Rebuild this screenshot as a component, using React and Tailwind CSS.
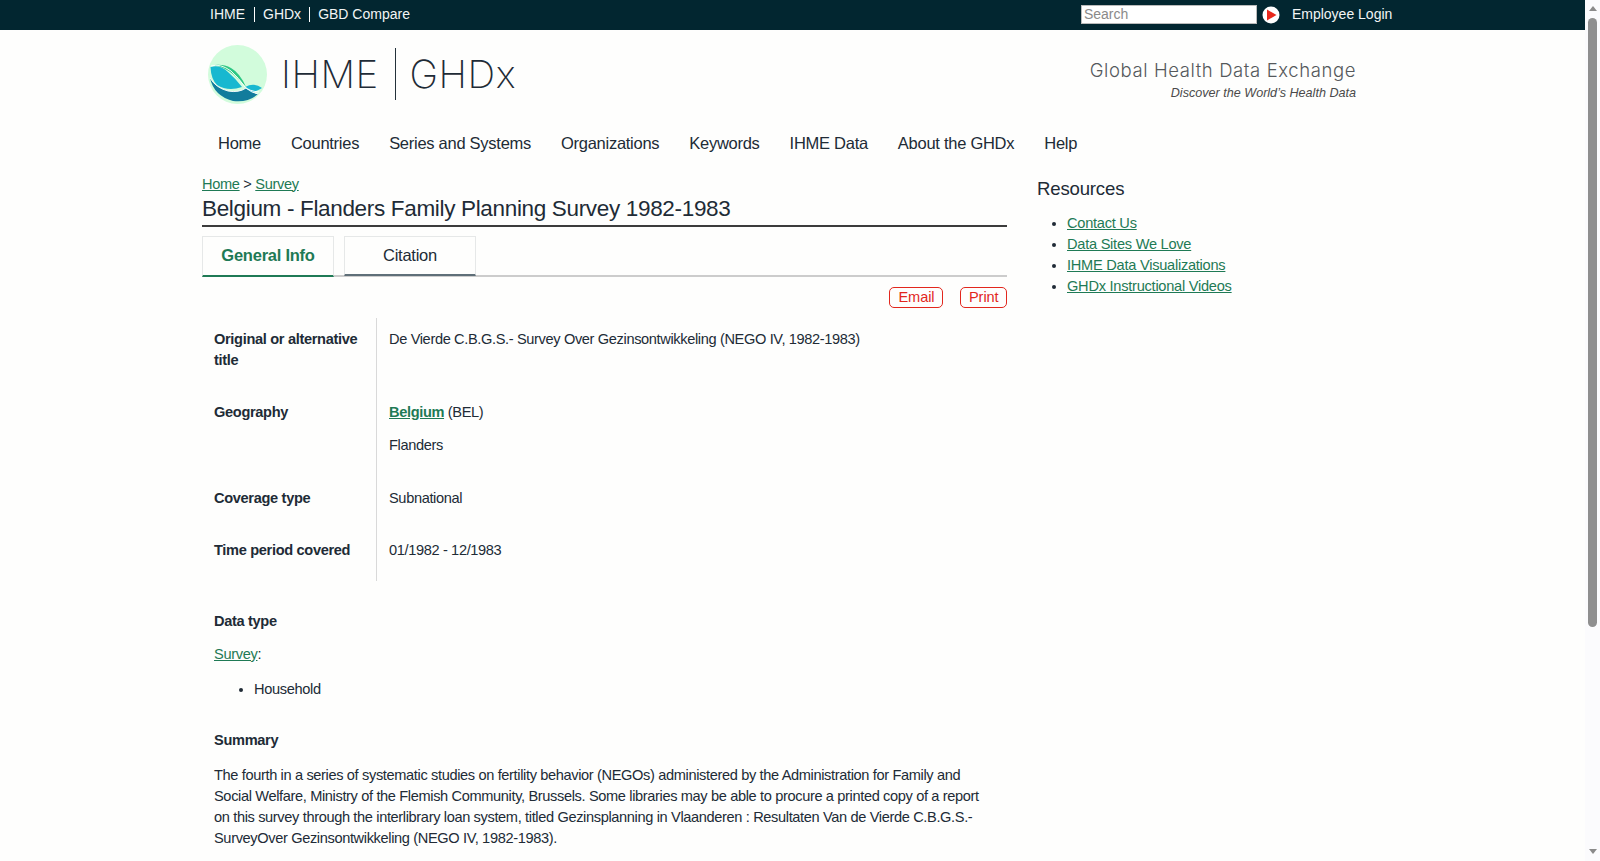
const SANS = "font-['Liberation_Sans',Arial,sans-serif]";

function Logo() {
  return (
    <svg width="59" height="59" viewBox="0 0 59 59" className="shrink-0 mt-[3px]">
      <circle cx="29.5" cy="29.5" r="29.5" fill="#d2fcdc" />
      <path d="M2 33 Q8 43 20 46 Q31 48 38 43 Q44 48 50 49 Q40 58 25 56 Q6 51 2 33Z" fill="#127c9c" />
      <path d="M2.5 22 Q12 19 20 27 Q28 34 34 42 Q20 47 9 40 Q3 34 2.5 22Z" fill="#17b8d0" />
      <path d="M6 20 Q16 19 23 23 Q32 28 38 42 Q31 34 25 29 Q16 22 6 20Z" fill="#2dc884" />
      <path d="M37 42 Q46 37 54 43 Q48 47 43 47 Q39 45 37 42Z" fill="#17b8d0" />
      <path d="M2 33 Q8 43 20 46 Q31 48 38 43 Q44 48 50 49" fill="none" stroke="#fff" strokeWidth="0.9" />
      <path d="M3 21 Q12 18 23 26 Q31 33 37 42 Q41 46 51 47" fill="none" stroke="#fff" strokeWidth="0.9" />
    </svg>
  );
}

function Tab({ active, children }) {
  return (
    <div
      className={`w-[132px] flex items-center justify-center border border-[#e6e8e8] text-[16.5px] border-b-2 tracking-[-0.25px] self-start ${
        active ? "h-[41px] pb-[1px] border-b-[#1f7a55] text-[#1f7a55] font-bold" : "h-[40px] border-b-[#5f6f78] text-[#212b36]"
      }`}
    >
      {children}
    </div>
  );
}

function Row({ label, children, extra }) {
  return (
    <div className="grid grid-cols-[175px_1fr]">
      <div className="border-r border-[#d9d9d9] pl-3 pr-3 pt-[11px] pb-[20px] font-bold">{label}</div>
      <div className={`pl-3 pt-[11px] tracking-[-0.36px] ${extra ? "pb-[21px]" : "pb-[20px]"}`}>{children}</div>
    </div>
  );
}

const A = ({ children, className }) => (
  <a href="#" className={`text-[#1f7a55] underline ${className || ""}`}>{children}</a>
);

export default function App() {
  return (
    <div className={`flex h-[861px] overflow-hidden bg-[#fefefd] text-[#212b36] text-[14.6px] leading-[21px] tracking-[-0.33px] ${SANS}`}>
      <div className="flex-1 min-w-0">
        <div className="h-[30px] bg-[#022630] text-[#f2f5f5] text-[14px] tracking-normal flex items-center pl-[210px] pb-[1px]">
          <div className="flex items-center">
            <span className="pr-[9px] border-r border-white leading-[15px]">IHME</span>
            <span className="px-[8px] border-r border-white leading-[15px]">GHDx</span>
            <span className="pl-[8px] leading-[15px]">GBD Compare</span>
          </div>
          <div className="ml-[671px] w-[176px] h-[19px] bg-white border border-[#bbb] text-[#8a8a8a] pl-[2px] flex items-center">Search</div>
          <svg width="18" height="18" viewBox="0 0 18 18" className="ml-[5px]">
            <circle cx="9" cy="9" r="8.5" fill="#fff" />
            <path d="M5 3.5 L14.5 9 L5 14.5Z" fill="#e8281c" />
          </svg>
          <span className="ml-[12px]">Employee Login</span>
        </div>

        <div className="h-[85px] flex items-center pl-[208px] pr-[229px] tracking-normal">
          <Logo />
          <div className="ml-[14px] mt-[3px] flex items-center font-['Inter',sans-serif] font-extralight text-[#1f2b36] text-[38.5px] leading-none tracking-[0.6px]">
            <span>IHME</span>
            <span className="w-[1.5px] h-[52px] bg-[#24323b] ml-[16px] mr-[13px]"></span>
            <span>GHDx</span>
          </div>
          <div className="ml-auto text-right mt-[17px]">
            <div className="font-['Inter',sans-serif] font-light text-[#55595c] text-[18.5px] leading-[24px] tracking-[0.6px]">Global Health Data Exchange</div>
            <div className="italic text-[#4a4a4a] text-[12.6px] leading-[22px]">Discover the World’s Health Data</div>
          </div>
        </div>

        <nav className="pl-[203px] flex text-[16.5px] tracking-[-0.27px] h-[56px] mb-[1px] items-center">
          {["Home", "Countries", "Series and Systems", "Organizations", "Keywords", "IHME Data", "About the GHDx", "Help"].map((n) => (
            <a key={n} className="px-[15px]">{n}</a>
          ))}
        </nav>

        <div className="pl-[202px] flex items-start">
          <main className="w-[805px] shrink-0">
            <div className="h-[24px] flex items-center">
              <span><A>Home</A> &gt; <A>Survey</A></span>
            </div>
            <h1 className="text-[22.5px] tracking-[-0.33px] leading-[26px] pb-[3px] border-b-2 border-[#3c3c3c]">Belgium - Flanders Family Planning Survey 1982-1983</h1>
            <div className="mt-[9px] flex gap-[10px] border-b-2 border-[#ccc] h-[41px]">
              <Tab active>General Info</Tab>
              <Tab>Citation</Tab>
            </div>
            <div className="flex justify-end gap-[17px] mt-[10px] text-[#e2271d] tracking-[-0.1px]">
              <span className="h-[21px] px-[8px] flex items-center border border-[#e2271d] rounded-[5px]">Email</span>
              <span className="h-[21px] px-[7.5px] flex items-center border border-[#e2271d] rounded-[5px]">Print</span>
            </div>

            <div className="mt-[10px]">
              <Row label="Original or alternative title">
                De Vierde C.B.G.S.- Survey Over Gezinsontwikkeling (NEGO IV, 1982-1983)
              </Row>
              <Row label="Geography" extra>
                <div><A className="font-bold">Belgium</A> (BEL)</div>
                <div className="mt-[12px]">Flanders</div>
              </Row>
              <Row label="Coverage type">Subnational</Row>
              <Row label="Time period covered">01/1982 - 12/1983</Row>
            </div>

            <div className="pl-3 pr-[18px]">
              <div className="mt-[30px] font-bold">Data type</div>
              <div className="mt-[12px]"><A>Survey</A>:</div>
              <ul className="list-disc pl-[40px] mt-[14px]">
                <li>Household</li>
              </ul>
              <div className="mt-[30px] font-bold">Summary</div>
              <p className="mt-[14px] tracking-[-0.36px]">
                The fourth in a series of systematic studies on fertility behavior (NEGOs) administered by the Administration for Family and Social Welfare, Ministry of the Flemish Community, Brussels. Some libraries may be able to procure a printed copy of a report on this survey through the interlibrary loan system, titled Gezinsplanning in Vlaanderen : Resultaten Van de Vierde C.B.G.S.- SurveyOver Gezinsontwikkeling (NEGO IV, 1982-1983).
              </p>
            </div>
          </main>
          <aside className="ml-[30px] w-[340px] tracking-[-0.25px]">
            <h2 className="text-[18.6px] tracking-[-0.18px] leading-[24px] mt-[5px]">Resources</h2>
            <ul className="list-disc pl-[30px] mt-[12px]">
              {["Contact Us", "Data Sites We Love", "IHME Data Visualizations", "GHDx Instructional Videos"].map((t) => (
                <li key={t}><A>{t}</A></li>
              ))}
            </ul>
          </aside>
        </div>
      </div>
      <div className="w-[15px] shrink-0 bg-[#fbfbfd] flex flex-col items-center">
        <div className="mt-[6px] w-0 h-0 border-x-[4.5px] border-x-transparent border-b-[5px] border-b-[#8a8a8a]"></div>
        <div className="mt-[7px] w-[9px] h-[609px] bg-[#8f8f8f] rounded-[5px]"></div>
        <div className="mt-auto mb-[7px] w-0 h-0 border-x-[4.5px] border-x-transparent border-t-[5px] border-t-[#8a8a8a]"></div>
      </div>
    </div>
  );
}
